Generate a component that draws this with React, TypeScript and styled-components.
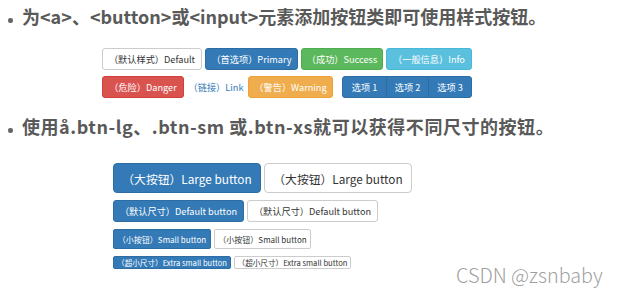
import React from "react";
import styled, { createGlobalStyle, css } from "styled-components";

const Global = createGlobalStyle`
  html, body { margin: 0; padding: 0; background: #fff; }
  body { font-family: "Noto Sans CJK SC", "Noto Sans", sans-serif; }
`;

const Page = styled.div`
  position: relative;
  width: 618px;
  height: 296px;
  overflow: hidden;
  background: #fff;
  display: flex;
  flex-direction: column;
`;

const Title = styled.div<{ $mt: number; $ls?: number }>`
  position: relative;
  margin-top: ${(p) => p.$mt}px;
  padding-left: 22px;
  height: 24px;
  line-height: 24px;
  font-family: "Noto Sans CJK SC", "Noto Sans", sans-serif;
  font-weight: 700;
  font-size: 18px;
  letter-spacing: ${(p) => p.$ls ?? 0}px;
  color: #595959;
  white-space: nowrap;
  &::before {
    content: "";
    position: absolute;
    left: 8px;
    top: 14px;
    width: 4.5px;
    height: 4.5px;
    border-radius: 50%;
    background: #666;
  }
`;

const Rows = styled.div<{ $mt: number; $left: number; $gap: number }>`
  margin-top: ${(p) => p.$mt}px;
  padding-left: ${(p) => p.$left}px;
  display: flex;
  flex-direction: column;
  row-gap: ${(p) => p.$gap}px;
`;

const Row = styled.div<{ $gap?: number }>`
  display: flex;
  align-items: center;
  column-gap: ${(p) => p.$gap ?? 3}px;
`;

type Variant = "default" | "primary" | "success" | "info" | "warning" | "danger" | "link";
type Size = "lg" | "md" | "sm" | "xs";

const palette: Record<Variant, { bg: string; bd: string; fg: string }> = {
  default: { bg: "#ffffff", bd: "#cccccc", fg: "#333333" },
  primary: { bg: "#337ab7", bd: "#2e6da4", fg: "#ffffff" },
  success: { bg: "#5cb85c", bd: "#4cae4c", fg: "#ffffff" },
  info: { bg: "#5bc0de", bd: "#46b8da", fg: "#ffffff" },
  warning: { bg: "#f0ad4e", bd: "#eea236", fg: "#ffffff" },
  danger: { bg: "#d9534f", bd: "#d43f3a", fg: "#ffffff" },
  link: { bg: "transparent", bd: "transparent", fg: "#337ab7" },
};

const sizes: Record<Size, { h: number; fs: number; r: number }> = {
  lg: { h: 30, fs: 11.8, r: 4 },
  md: { h: 22, fs: 9.2, r: 3 },
  sm: { h: 20, fs: 8, r: 2 },
  xs: { h: 13, fs: 7.6, r: 2 },
};

const Btn = styled.button<{ $v: Variant; $s: Size; $w: number }>`
  box-sizing: border-box;
  display: inline-flex;
  align-items: center;
  justify-content: center;
  padding: 0;
  margin: 0;
  width: ${(p) => p.$w}px;
  height: ${(p) => sizes[p.$s].h}px;
  font-family: "Noto Sans CJK SC", "Noto Sans", sans-serif;
  font-size: ${(p) => sizes[p.$s].fs}px;
  white-space: nowrap;
  border-radius: ${(p) => sizes[p.$s].r}px;
  ${(p) => css`
    background: ${palette[p.$v].bg};
    border: 1px solid ${palette[p.$v].bd};
    color: ${palette[p.$v].fg};
  `}
`;

const Group = styled.div<{ $ml: number }>`
  display: flex;
  margin-left: ${(p) => p.$ml}px;
  & > ${Btn} {
    border-radius: 0;
    margin-left: -1px;
  }
  & > ${Btn}:first-child {
    margin-left: 0;
    border-radius: 3px 0 0 3px;
  }
  & > ${Btn}:last-child {
    border-radius: 0 3px 3px 0;
  }
`;

const Watermark = styled.div`
  position: absolute;
  left: 456px;
  top: 261px;
  font-family: "Noto Sans CJK SC", "Noto Sans", sans-serif;
  font-weight: 300;
  font-size: 19.8px;
  line-height: 28px;
  color: #9f9f9f;
  white-space: nowrap;
`;

export default function App() {
  return (
    <Page>
      <Global />
      <Title $mt={4}>为&lt;a&gt;、&lt;button&gt;或&lt;input&gt;元素添加按钮类即可使用样式按钮。</Title>
      <Rows $mt={20} $left={102} $gap={6}>
        <Row>
          <Btn $v="default" $s="md" $w={100}>（默认样式）Default</Btn>
          <Btn $v="primary" $s="md" $w={93}>（首选项）Primary</Btn>
          <Btn $v="success" $s="md" $w={82}>（成功）Success</Btn>
          <Btn $v="info" $s="md" $w={86}>（一般信息）Info</Btn>
        </Row>
        <Row>
          <Btn $v="danger" $s="md" $w={82}>（危险）Danger</Btn>
          <Btn $v="link" $s="md" $w={58}>（链接）Link</Btn>
          <Btn $v="warning" $s="md" $w={85}>（警告）Warning</Btn>
          <Group $ml={6}>
            <Btn $v="primary" $s="md" $w={45}>选项 1</Btn>
            <Btn $v="primary" $s="md" $w={43}>选项 2</Btn>
            <Btn $v="primary" $s="md" $w={44}>选项 3</Btn>
          </Group>
        </Row>
      </Rows>
      <Title $mt={16} $ls={0.55}>使用å.btn-lg、.btn-sm 或.btn-xs就可以获得不同尺寸的按钮。</Title>
      <Rows $mt={25} $left={113} $gap={7}>
        <Row>
          <Btn $v="primary" $s="lg" $w={148}>（大按钮）Large button</Btn>
          <Btn $v="default" $s="lg" $w={148}>（大按钮）Large button</Btn>
        </Row>
        <Row>
          <Btn $v="primary" $s="md" $w={131}>（默认尺寸）Default button</Btn>
          <Btn $v="default" $s="md" $w={131}>（默认尺寸）Default button</Btn>
        </Row>
        <Row>
          <Btn $v="primary" $s="sm" $w={98}>（小按钮）Small button</Btn>
          <Btn $v="default" $s="sm" $w={97}>（小按钮）Small button</Btn>
        </Row>
        <Row>
          <Btn $v="primary" $s="xs" $w={118}>（超小尺寸）Extra small button</Btn>
          <Btn $v="default" $s="xs" $w={117}>（超小尺寸）Extra small button</Btn>
        </Row>
      </Rows>
      <Watermark>CSDN @zsnbaby</Watermark>
    </Page>
  );
}
